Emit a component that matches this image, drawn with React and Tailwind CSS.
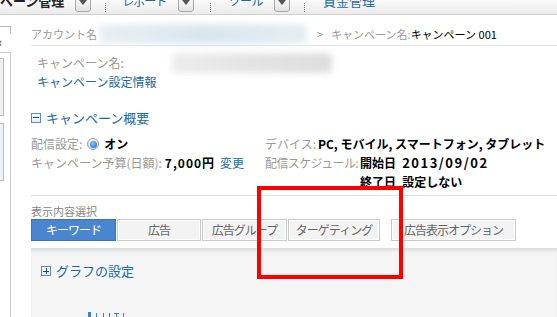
const blue = 'text-[#1b6aa5]'

function DropBtn({ className = '' }) {
  return (
    <div className={`-mt-[4px] w-[16px] h-[16px] shrink-0 rounded-[3px] border border-[#a8a8a8] bg-gradient-to-b from-white to-[#e2e2e2] flex items-center justify-center pb-[3px] ${className}`}>
      <div className="w-0 h-0 border-l-[4px] border-r-[4px] border-t-[5px] border-l-transparent border-r-transparent border-t-[#555]" />
    </div>
  )
}

function Sep({ className = '' }) {
  return <div className={`mt-[3px] h-[9px] w-0 border-l border-dotted border-[#777] ${className}`} />
}

function TopNav() {
  return (
    <div className="h-[15px] border-b border-[#d0d0d0] bg-gradient-to-b from-[#fafafa] to-[#ebebeb] flex items-start overflow-hidden whitespace-nowrap">
      <span className="-ml-[39px] -mt-[7px] text-[13px] leading-[16px] font-bold text-[#222]">キャンペーン管理</span>
      <DropBtn className="ml-[11px]" />
      <Sep className="ml-[14px]" />
      <span className={`ml-[16px] -mt-[7px] text-[12px] tracking-[-1px] leading-[16px] ${blue}`}>レポート</span>
      <DropBtn className="ml-[12px]" />
      <Sep className="ml-[16px]" />
      <span className={`ml-[17px] -mt-[7px] text-[12px] tracking-[-0.5px] leading-[16px] ${blue}`}>ツール</span>
      <DropBtn className="ml-[11px]" />
      <Sep className="ml-[14px]" />
      <span className={`ml-[18px] -mt-[7px] text-[13px] leading-[16px] ${blue}`}>資金管理</span>
    </div>
  )
}

function Sidebar() {
  return (
    <div className="w-[11px] shrink-0 flex flex-col">
      <div className="mt-[11px] h-[8px] border-t border-r border-[#bbb]" />
      <div className="mt-[2px] -ml-[4px] text-[13px] leading-[12px] text-[#333]">«</div>
      <div className="mt-[4px] flex-1 border-t border-r border-[#ccc] pt-[5px]">
        <div className="w-[4px] h-[58px] border border-l-0 border-[#bbb] bg-[#efefef]" />
        <div className="mt-[7px] w-[4px] h-[58px] border border-l-0 border-[#a9bcd8] bg-[#eef2f8]" />
      </div>
    </div>
  )
}

function BoxIcon({ plus }) {
  return (
    <div className="w-[10px] h-[10px] shrink-0 border border-[#5a8ad0] bg-gradient-to-b from-white to-[#e4ecf7] relative flex items-center justify-center">
      <div className="w-[6px] h-[1px] bg-[#1b4f8a]" />
      {plus && <div className="absolute w-[1px] h-[6px] bg-[#1b4f8a]" />}
    </div>
  )
}

function Radio() {
  return (
    <div className="w-[12px] h-[12px] rounded-full border border-[#a0a0a0] bg-gradient-to-b from-[#f4f4f4] to-[#d8d8d8] flex items-center justify-center">
      <div className="w-[7px] h-[7px] rounded-full bg-[radial-gradient(circle_at_40%_35%,#7cc3ff,#0a6fd8)]" />
    </div>
  )
}

const tabs = [
  { label: 'キーワード', w: 'w-[85px]', active: true },
  { label: '広告', w: 'w-[84px] ml-[1px]' },
  { label: '広告グループ', w: 'w-[85px] ml-[1px]' },
  { label: 'ターゲティング', w: 'w-[92px] ml-[1px]' },
  { label: '広告表示オプション', w: 'w-[125px] ml-[11px]' },
]

export default function App() {
  return (
    <div className="relative w-[557px] h-[317px] overflow-hidden bg-white font-['Noto_Sans_CJK_JP','Liberation_Sans',sans-serif] text-[12px] text-[#999]">
      <TopNav />
      <div className="flex h-[302px]">
        <Sidebar />
        <main className="flex-1 min-w-0 pl-[20px] flex flex-col">
          <div className="h-[33px] pt-[9px] border-b border-[#e2e2e2] flex items-center whitespace-nowrap text-[11px]">
            <span>アカウント名</span>
            <div className="ml-[2px] w-[208px] h-[20px] rounded-[4px] bg-gradient-to-r from-[#e9f0f4] via-[#d9e6ef] to-[#e6eef3] blur-[3px]" />
            <span className="ml-[10px]">&gt;</span>
            <span className="ml-[8px]">キャンペーン名:</span>
            <span className="text-black">キャンペーン 001</span>
          </div>

          <div className="mt-[7px] pl-[6px] leading-[17px] whitespace-nowrap">
            <div className="flex items-center">
              <span>キャンペーン名:</span>
              <div className="ml-[48px] w-[160px] h-[20px] rounded-[4px] bg-gradient-to-r from-[#ededed] via-[#e4e4e4] to-[#dedede] blur-[3px]" />
            </div>
            <div className={blue}>キャンペーン設定情報</div>
          </div>

          <div className="mt-[19px] h-[18px] flex items-center">
            <BoxIcon />
            <span className={`ml-[5px] text-[13px] ${blue}`}>キャンペーン概要</span>
          </div>

          <div className="mt-[8px] flex whitespace-nowrap">
            <div className="w-[234px] shrink-0">
              <div className="h-[19px] flex items-center">
                <span>配信設定:</span>
                <span className="ml-[5px]"><Radio /></span>
                <span className="ml-[5px] font-bold text-black">オン</span>
              </div>
              <div className="h-[19px] flex items-center">
                <span>キャンペーン予算(日額):</span>
                <span className="ml-[3px] font-bold text-black tracking-[1px]">7,000円</span>
                <span className={`ml-[5px] ${blue}`}>変更</span>
              </div>
            </div>
            <div className="min-w-0">
              <div className="h-[19px] flex items-center">
                <span className="shrink-0 pr-[2px]">デバイス:</span>
                <span className="font-bold text-black">PC, モバイル, スマートフォン, タブレット</span>
              </div>
              <div className="flex">
                <span className="shrink-0 h-[19px] flex items-center tracking-[-0.6px] pr-[2px]">配信スケジュール:</span>
                <div className="font-bold text-black shrink-0">
                  <div className="h-[19px] flex items-center">開始日<span className="ml-[6px] text-[13px] tracking-[1.5px]">2013/09/02</span></div>
                  <div className="h-[19px] flex items-center">終了日<span className="ml-[6px]">設定しない</span></div>
                </div>
              </div>
            </div>
          </div>

          <div className="mt-[3px] border-t border-[#e2e2e2]" />
          <div className="mt-[8px] text-[11px] leading-[14px] text-[#888]">表示内容選択</div>

          <div className="mt-[1px] flex h-[25px]">
            {tabs.map(t => (
              <div key={t.label}
                className={`${t.w} h-full shrink-0 flex items-center justify-center border text-[12px] tracking-[-1px] whitespace-nowrap ${t.active ? 'bg-[#4a86d0] border-[#3b72b9] text-white' : 'bg-[#f3f3f3] border-[#c9c9c9] text-[#666] shadow-[inset_0_0_0_1px_#fff]'}`}>
                {t.label}
              </div>
            ))}
          </div>

          <div className="mt-[7px] flex-1 bg-[#f5f5f5] shadow-[inset_0_4px_4px_-2px_rgba(0,0,0,0.13)] pl-[10px] pt-[14px]">
            <div className="h-[18px] flex items-center">
              <BoxIcon plus />
              <span className={`ml-[5px] text-[13px] ${blue}`}>グラフの設定</span>
            </div>
            <svg className="mt-[31px] ml-[47px] block" width="40" height="6" viewBox="0 0 40 6">
              <rect x="0" y="1" width="3" height="5" fill="#3f7fd3" />
              <rect x="8" y="2" width="1" height="4" fill="#3f7fd3" />
              <rect x="15" y="2" width="1" height="4" fill="#3f7fd3" />
              <rect x="21" y="2" width="1" height="4" fill="#3f7fd3" />
              <rect x="26" y="2" width="5" height="1" fill="#3f7fd3" />
              <rect x="28" y="2" width="1" height="4" fill="#3f7fd3" />
              <rect x="35" y="2" width="1" height="4" fill="#3f7fd3" />
            </svg>
          </div>
        </main>
      </div>

      <div className="absolute left-[257px] top-[186px] w-[146px] h-[93px] border-4 border-[#ff0000]" />
    </div>
  )
}
